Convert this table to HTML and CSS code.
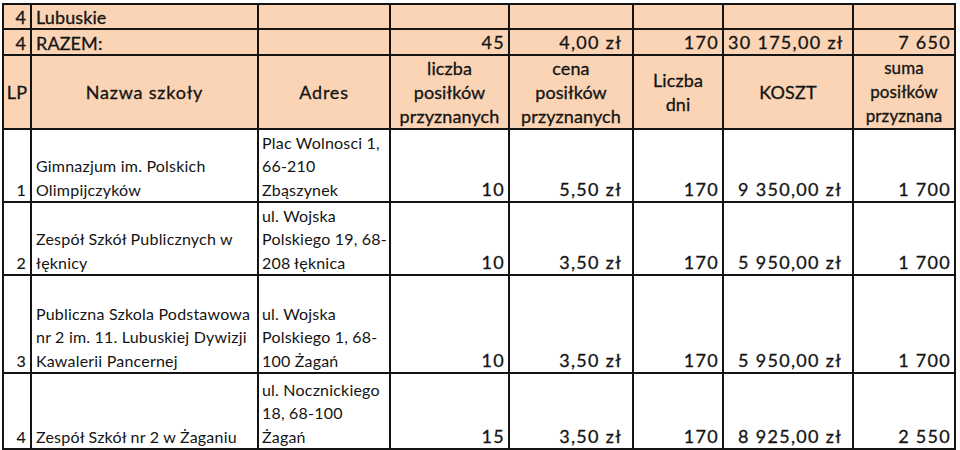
FILE: index.html
```html
<!DOCTYPE html>
<html lang="pl">
<head>
<meta charset="utf-8">
<title>Lubuskie</title>
<link rel="stylesheet" href="styles.css">
</head>
<body>
<table class="sheet">
  <colgroup>
    <col class="c-lp"><col class="c-name"><col class="c-addr"><col class="c-cnt"><col class="c-price"><col class="c-days"><col class="c-cost"><col class="c-sum">
  </colgroup>
  <tr class="peach r-title">
    <td class="lp big">4</td>
    <td class="big">Lubuskie</td>
    <td></td><td></td><td></td><td></td><td></td><td></td>
  </tr>
  <tr class="peach r-total">
    <td class="lp big">4</td>
    <td class="big">RAZEM:</td>
    <td></td>
    <td class="num">45</td>
    <td class="num zl">4,00 zł</td>
    <td class="num">170</td>
    <td class="num zl">30 175,00 zł</td>
    <td class="num">7 650</td>
  </tr>
  <tr class="peach r-head hd">
    <td>LP</td>
    <td class="wide">Nazwa szkoły</td>
    <td class="wide">Adres</td>
    <td>liczba<br>posiłków<br>przyznanych</td>
    <td>cena<br>posiłków<br>przyznanych</td>
    <td>Liczba<br>dni</td>
    <td>KOSZT</td>
    <td class="small">suma<br>posiłków<br>przyznana</td>
  </tr>
  <tr class="r-a">
    <td class="lp">1</td>
    <td class="txt">Gimnazjum im. Polskich<br>Olimpijczyków</td>
    <td class="txt addr">Plac Wolnosci 1,<br>66-210<br>Zbąszynek</td>
    <td class="num">10</td>
    <td class="num zl">5,50 zł</td>
    <td class="num">170</td>
    <td class="num zl">9 350,00 zł</td>
    <td class="num">1 700</td>
  </tr>
  <tr class="r-a">
    <td class="lp">2</td>
    <td class="txt">Zespół Szkół Publicznych w<br>łęknicy</td>
    <td class="txt addr">ul. Wojska<br>Polskiego 19, 68-<br>208 łęknica</td>
    <td class="num">10</td>
    <td class="num zl">3,50 zł</td>
    <td class="num">170</td>
    <td class="num zl">5 950,00 zł</td>
    <td class="num">1 700</td>
  </tr>
  <tr class="r-c">
    <td class="lp">3</td>
    <td class="txt">Publiczna Szkola Podstawowa<br>nr 2 im. 11. Lubuskiej Dywizji<br>Kawalerii Pancernej</td>
    <td class="txt addr">ul. Wojska<br>Polskiego 1, 68-<br>100 Żagań</td>
    <td class="num">10</td>
    <td class="num zl">3,50 zł</td>
    <td class="num">170</td>
    <td class="num zl">5 950,00 zł</td>
    <td class="num">1 700</td>
  </tr>
  <tr class="r-d">
    <td class="lp">4</td>
    <td class="txt">Zespół Szkół nr 2 w Żaganiu</td>
    <td class="txt addr">ul. Nocznickiego<br>18, 68-100<br>Żagań</td>
    <td class="num">15</td>
    <td class="num zl">3,50 zł</td>
    <td class="num">170</td>
    <td class="num zl">8 925,00 zł</td>
    <td class="num">2 550</td>
  </tr>
</table>
</body>
</html>
```

FILE: styles.css
```css
html, body {
  margin: 0;
  padding: 0;
  background: #ffffff;
}

body {
  font-family: Lato, "Liberation Sans", sans-serif;
  color: #141414;
}

.sheet {
  border-collapse: collapse;
  table-layout: fixed;
  width: 954px;
  margin: 3px 0 0 2px;
}

.c-lp { width: 28px; }
.c-name { width: 227px; }
.c-addr { width: 132px; }
.c-cnt { width: 119px; }
.c-price { width: 124px; }
.c-days { width: 90px; }
.c-cost { width: 130px; }
.c-sum { width: 102px; }

.sheet td {
  border: 2px solid #141414;
  padding: 0 4px;
  vertical-align: bottom;
  white-space: nowrap;
  overflow: hidden;
  font-size: 16px;
  line-height: 23.5px;
  letter-spacing: 0.2px;
}

.peach td {
  background: #fad4b4;
}

.r-title { height: 25px; }
.r-total { height: 24px; }
.r-head { height: 74px; }
.r-a { height: 73px; }
.r-c { height: 98px; }
.r-d { height: 76px; }

.r-title td,
.r-total td {
  line-height: 21px;
}

.sheet td.lp {
  text-align: right;
  padding: 0 4px 0 0;
  -webkit-text-stroke: 0.15px #141414;
}

.sheet td.big {
  font-size: 18px;
  letter-spacing: 0.1px;
  -webkit-text-stroke: 0.3px #141414;
}

.sheet td.addr {
  padding-left: 3px;
}

.sheet td.num {
  text-align: right;
  font-size: 18px;
  letter-spacing: 1.3px;
  line-height: 24px;
  padding-right: 3px;
  -webkit-text-stroke: 0.3px #141414;
}

.sheet td.num.zl {
  padding-right: 10px;
}

.hd td {
  text-align: center;
  vertical-align: middle;
  font-size: 18px;
  line-height: 24px;
  padding: 0 2px;
  -webkit-text-stroke: 0.3px #141414;
}

.sheet .hd td {
  letter-spacing: 0.1px;
}

.sheet .hd td.wide {
  letter-spacing: 0.8px;
}

.sheet .hd td.small {
  font-size: 17px;
}
```
